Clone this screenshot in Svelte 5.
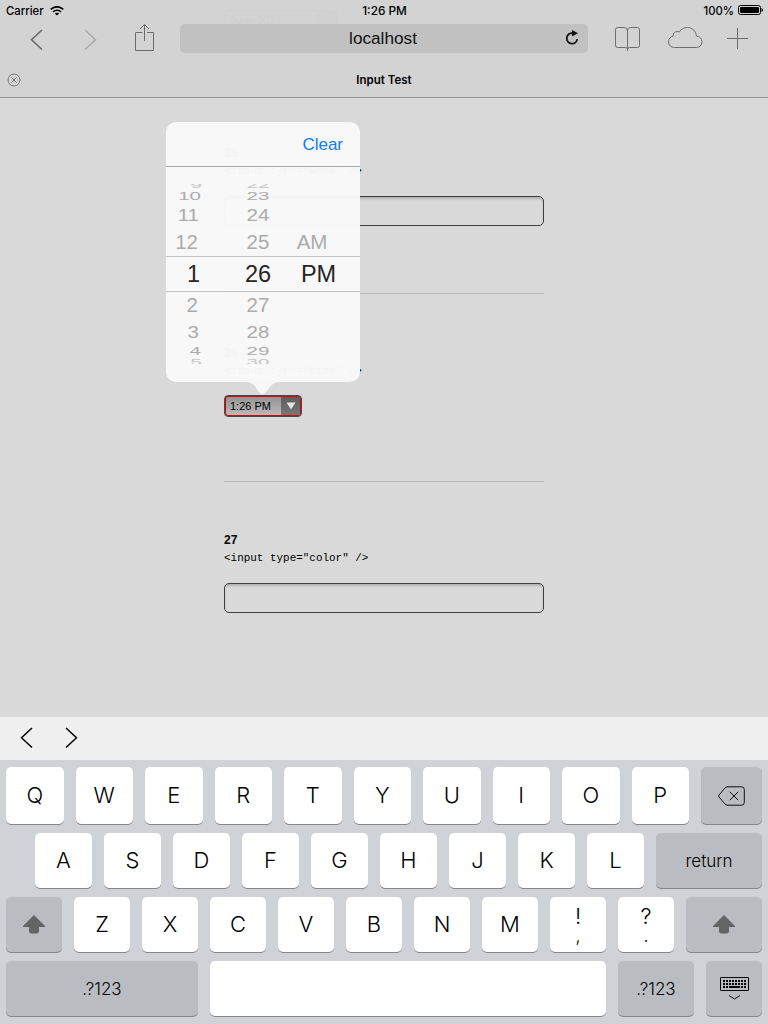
<script>
  const rows = [
    { h: 6, s: 0.4, hour: '9', min: '22', dx: 4, dy: -2, edge: true },
    { h: 13, s: 0.5, hour: '10', min: '23', dx: 3, dy: -1 },
    { h: 25, s: 0.8, hour: '11', min: '24', dx: 1, dy: -1 },
    { h: 28, s: 0.96, hour: '12', min: '25', ap: 'AM', dx: 0, dy: 0 },
    { h: 36, s: 1, hour: '1', min: '26', ap: 'PM', sel: true, dx: 1, dy: 0 },
    { h: 27, s: 0.96, hour: '2', min: '27', dx: 0, dy: -1 },
    { h: 26, s: 0.8, hour: '3', min: '28', dx: 1, dy: 0 },
    { h: 13, s: 0.5, hour: '4', min: '29', dx: 3, dy: -1 },
    { h: 6, s: 0.4, hour: '5', min: '30', dx: 4, dy: 1, edge: true }
  ];
  const top = 'QWERTYUIOP'.split('');
  const home = 'ASDFGHJKL'.split('');
  const bottom = 'ZXCVBNM'.split('');
  const dots = [0, 1, 2, 3, 4, 5, 6, 7];
</script>

{#snippet shift()}
  <svg width="22" height="19" viewBox="0 0 22 19"><path d="M11 0 22 11V12H16V16Q16 18.5 13.500 18.500H8.500Q6 18.500 6 16V12H0V11Z" fill="#636466" /></svg>
{/snippet}

<div class="screen">
  <header>
    <div class="ghost">June 2014<i></i></div>
    <div class="status">
      <div class="carrier">Carrier
        <svg width="14" height="10" viewBox="0 0 14 10"><g fill="none" stroke="#000" stroke-width="1.6"><path d="M.7 3.400Q7-1.800 13.300 3.400" /><path d="M3 5.900Q7 2.700 11 5.900" /></g><path d="M4.800 7.500Q7 5.900 9.200 7.500L7 9.600Z" /></svg>
      </div>
      <div class="time">1:26 PM</div>
      <div class="power">100%
        <svg width="25" height="10" viewBox="0 0 25 10"><rect x=".5" y=".5" width="22" height="9" rx="2" fill="none" stroke="#000" /><rect x="2" y="2" width="19" height="6" rx="1" /><path d="M23.500 3Q25 3.500 25 5T23.500 7Z" /></svg>
      </div>
    </div>
    <div class="toolbar">
      <svg class="back" width="13" height="22" viewBox="0 0 13 22"><path d="M12 1 1.500 10.800 12 20.500" fill="none" stroke="#666" stroke-width="1.500" /></svg>
      <svg class="fwd" width="13" height="22" viewBox="0 0 13 22"><path d="M1 1 11.500 10.800 1 20.500" fill="none" stroke="#aaa" stroke-width="1.500" /></svg>
      <svg class="share" width="20" height="28" viewBox="0 0 20 28"><path d="M7.500 8.500H.5V26.500H18.500V8.500H12M9.500 17V.8M5 5 9.500.5 14 5" fill="none" stroke="#6c6c6c" /></svg>
      <div class="url"><span>localhost</span>
        <svg width="14" height="16" viewBox="0 0 14 16"><path d="M8 3.200A5.300 5.300 0 1 0 12.300 9" fill="none" stroke="#111" stroke-width="1.800" /><path d="M7 0 13 3.200 7 6.500Z" fill="#111" /></svg>
      </div>
      <svg class="book" width="26" height="25" viewBox="0 0 26 25"><path d="M12.500 24V4Q12.500.500 9.500.500H2.500Q.5.500.5 2.500V18.500Q.5 20.500 2.500 20.500H10.500Q12.500 20.500 12.500 22.500Q12.500 20.500 14.500 20.500H22.500Q24.500 20.500 24.500 18.500V2.500Q24.500.500 22.500.500H15.500Q12.500.500 12.500 4" fill="none" stroke="#6d6d6d" /></svg>
      <svg class="cloud" width="35" height="22" viewBox="0 0 35 22"><path d="M6.500 20.500C3 20.500.5 18.200.5 14.800C.5 11.900 2.400 9.700 5.200 9C4.500 6 8 3.500 11.300 5C13 2.200 16 .5 19.300.5C24.300.5 28.200 4.500 28.400 9C31.800 9.300 34 11.700 34 14.800C34 18.200 31.500 20.500 28.300 20.500Z" fill="none" stroke="#6d6d6d" /></svg>
      <svg class="plus" width="21" height="21" viewBox="0 0 21 21"><path d="M0 10.500H21M10.500 0V21" stroke="#6b6b6b" /></svg>
    </div>
    <div class="tab">
      <svg width="14" height="14" viewBox="0 0 14 14"><g fill="none" stroke="#777"><circle cx="7" cy="7" r="6" /><path d="m4.500 4.500 5 5m0-5-5 5" /></g></svg>
      <b>Input Test</b>
    </div>
  </header>

  <main>
    <section><h2>25</h2><code>&lt;input type="week" /&gt;</code><div class="field"></div></section>
    <section><h2>26</h2><code>&lt;input type="time" /&gt;</code>
      <div class="select"><span>1:26 PM</span><i><svg width="10" height="8" viewBox="0 0 10 8"><path d="M.5.500H9.500L5 7.500Z" fill="#e5e5e5" /></svg></i></div>
    </section>
    <section><h2>27</h2><code>&lt;input type="color" /&gt;</code><div class="field"></div></section>
  </main>

  <div class="popover">
    <div class="clear">Clear</div>
    <div class="wheel">
      {#each rows as r}
        <div class="wrow" class:sel={r.sel} class:edge={r.edge} style="height:{r.h}px">
          <span class="hour" style="transform:translate({r.dx}px,{r.dy}px) scaleY({r.s})">{r.hour}</span>
          <span class="min" style="transform:translateY({r.dy}px) scaleY({r.s})">{r.min}</span>
          <span class="ap">{r.ap ?? ''}</span>
        </div>
      {/each}
    </div>
    <svg class="tip" width="34" height="14" viewBox="0 0 34 14"><path d="M0 0C8 .5 8 4 13 10Q16.500 15 20 10C25 4 26 .5 34 0Z" fill="#f7f7f7" /></svg>
  </div>

  <div class="accessory">
    <svg width="13" height="22" viewBox="0 0 13 22"><path d="M12 1 1.500 10.800 12 20.500" fill="none" stroke="#000" stroke-width="1.500" /></svg>
    <svg width="13" height="22" viewBox="0 0 13 22"><path d="M1 1 11.500 10.800 1 20.500" fill="none" stroke="#000" stroke-width="1.500" /></svg>
  </div>
  <div class="keyboard">
    <div class="row r1">
      {#each top as k}<div class="key letter">{k}</div>{/each}
      <div class="key dark"><svg width="28" height="20" viewBox="0 0 28 20"><g fill="none" stroke="#111"><path d="M9 .8H23.500Q26.300.800 26.300 3.500V16.500Q26.300 19.200 23.500 19.200H9Q8 19.200 7 18L1 11Q.2 10 1 9L7 2Q8 .8 9 .8Z" /><path d="m11.800 5.800 8.400 8.400m0-8.400-8.400 8.400" /></g></svg></div>
    </div>
    <div class="row r2">
      {#each home as k}<div class="key letter">{k}</div>{/each}
      <div class="key dark word">return</div>
    </div>
    <div class="row r3">
      <div class="key dark">{@render shift()}</div>
      {#each bottom as k}<div class="key letter">{k}</div>{/each}
      <div class="key pair"><span>!</span><span>,</span></div>
      <div class="key pair"><span>?</span><span>.</span></div>
      <div class="key dark">{@render shift()}</div>
    </div>
    <div class="row r4">
      <div class="key dark num">.?123</div>
      <div class="key"></div>
      <div class="key dark num">.?123</div>
      <div class="key dark"><svg width="29" height="24" viewBox="0 0 29 24"><rect x=".5" y=".5" width="28" height="13" rx=".5" fill="none" stroke="#000" />
        {#each dots as d}<path d="M{3 + d * 3} 3h2v2h-2zM{3 + d * 3} 6h2v2h-2z" />{/each}
        <path d="M3 9h2v2H3zM6 9h2v2H6zM9 9h11v2H9zM21 9h2v2h-2zM24 9h2v2h-2z" />
        <path d="m9 18.500 5.500 3.500 5.500-3.500" fill="none" stroke="#111" /></svg></div>
    </div>
  </div>
</div>

<style>
  :global(body) { margin: 0; }
  .screen { position: relative; width: 768px; height: 1024px; overflow: hidden; background: #d9d9d9; color: #000; font-family: "Liberation Sans", Arial, sans-serif; display: flex; flex-direction: column; }
  svg { display: block; flex: none; }
  header { box-sizing: border-box; height: 98px; background: #d3d3d3; border-bottom: 1px solid #929292; flex: none; position: relative; }
  .ghost { position: absolute; left: 224px; top: 10px; width: 106px; height: 18px; border: 1px solid #555; border-radius: 4px; padding-left: 5px; box-sizing: content-box; font-size: 11px; line-height: 18px; opacity: .015; }
  .ghost i { position: absolute; right: 0; top: 0; width: 20px; height: 18px; background: #777; }
  .status { display: grid; grid-template-columns: 1fr 1fr 1fr; height: 22px; align-items: center; padding: 0 5px 0 6px; font: 500 11.300px/22px Inter, "Liberation Sans", sans-serif; }
  .carrier, .power { display: flex; align-items: center; gap: 6px; }
  .power { justify-content: flex-end; gap: 4px; }
  .power svg { margin-top: -2px; }
  .carrier svg { margin-top: -1px; }
  .time { text-align: center; font-size: 11.800px; }
  .toolbar { display: flex; height: 40px; padding-left: 30px; }
  .back, .fwd { margin-top: 7px; }
  .fwd { margin-left: 41px; }
  .share { margin: 2px 25px 0 38px; }
  .url { box-sizing: border-box; width: 408px; height: 29px; margin-top: 2px; padding-right: 2px; border-radius: 5px; background: #c1c1c2; display: flex; align-items: center; justify-content: center; position: relative; font-size: 17.200px; color: #111; }
  .url svg { position: absolute; right: 9px; top: 6px; }
  .book { margin: 5px 0 0 27px; }
  .cloud { margin: 5px 0 0 27px; }
  .plus { margin: 6px 0 0 24px; }
  .tab { display: grid; grid-template-columns: 30px 1fr 30px; align-items: center; height: 35px; padding: 0 7px; font: 11.500px/35px Inter, sans-serif; text-align: center; }
  .tab b { font-weight: 600; padding-top: 1px; }
  main { width: 320px; margin: 0 auto; flex: 1; }
  section { padding-top: 50px; border-bottom: 1px solid #b9b9b9; height: 137px; }
  section:first-child { padding-top: 46px; height: 149px; }
  section:last-child { padding-top: 49px; border: 0; }
  h2 { margin: 0; font-size: 12px; line-height: 18px; height: 17px; }
  section code { display: block; font: 10.950px/20px "Liberation Mono", monospace; height: 18px; white-space: pre; }
  .field { box-sizing: border-box; height: 30px; margin-top: 17px; border: 1px solid #3f3f42; border-radius: 5px; box-shadow: inset 0 2px 2px #b4b4b4; }
  .select { box-sizing: border-box; width: 78px; height: 22px; margin-top: 16px; border: 1px solid #4a4a4a; border-radius: 4px; display: flex; background: linear-gradient(#929292, #bcbcbc); box-shadow: inset 0 0 0 1px #d60000; overflow: hidden; font-size: 11px; line-height: 20px; }
  .select span { width: 56px; padding-left: 5px; box-sizing: border-box; }
  .select i { flex: 1; margin: 1px 1px 1px 0; background: linear-gradient(#5d5d5d, #777); display: flex; align-items: center; justify-content: center; }
  .popover { position: absolute; left: 166px; top: 122px; width: 194px; height: 260px; border-radius: 10px; background: rgba(248, 248, 248, .985); }
  .clear { height: 44px; border-bottom: 1px solid #a7a7a7; text-align: right; padding-right: 17px; font-size: 17px; line-height: 45px; color: #087dff; }
  .wheel { padding-top: 17px; }
  .wrow { display: flex; align-items: center; overflow: hidden; font-size: 20.500px; line-height: 28px; color: #ababab; box-sizing: border-box; }
  .wrow span { flex: none; }
  .edge { color: #c4c4c4; }
  .hour { width: 32px; text-align: right; }
  .min { width: 50px; margin-left: 35px; text-align: center; }
  .ap { width: 58px; text-align: center; }
  .sel { border-top: 1px solid #c3c3c3; border-bottom: 1px solid #c3c3c3; color: #262626; font-size: 23.500px; }
  .sel .hour { width: 33px; }
  .sel .min { margin-left: 34px; }
  .sel .ap { width: 71px; }
  .tip { position: absolute; left: 80px; top: 260px; }
  .accessory { height: 43px; box-sizing: border-box; background: #efefef; display: flex; gap: 32px; padding: 10px 0 0 20px; flex: none; }
  .keyboard { height: 264px; box-sizing: border-box; padding: 7px 6px 0; background: #cfd3d7; flex: none; font: 300 22px Inter, "Liberation Sans", sans-serif; }
  .row { display: grid; column-gap: 12px; height: 55px; margin-bottom: 9px; }
  .r1 { height: 57px; grid-template-columns: repeat(10, 57.500px) 61px; }
  .r2 { grid-template-columns: repeat(9, 57px) 106px; padding-left: 29px; }
  .r3 { grid-template-columns: repeat(10, 56px) 76px; }
  .r4 { grid-template-columns: 192px 396px 76px 56px; }
  .key { border-radius: 5px; background: #fff; box-shadow: 0 1px 0 #84878b; display: flex; align-items: center; justify-content: center; }
  .letter { box-sizing: border-box; padding-bottom: 2px; }
  .dark { background: #b9bdc1; }
  .word { font-size: 17px; }
  .num { font-size: 17px; }
  .pair { flex-direction: column; font-size: 22px; }
  .pair span { line-height: 28px; height: 26px; }
  .pair span + span { font-size: 18px; line-height: 16px; height: 20px; }
</style>
